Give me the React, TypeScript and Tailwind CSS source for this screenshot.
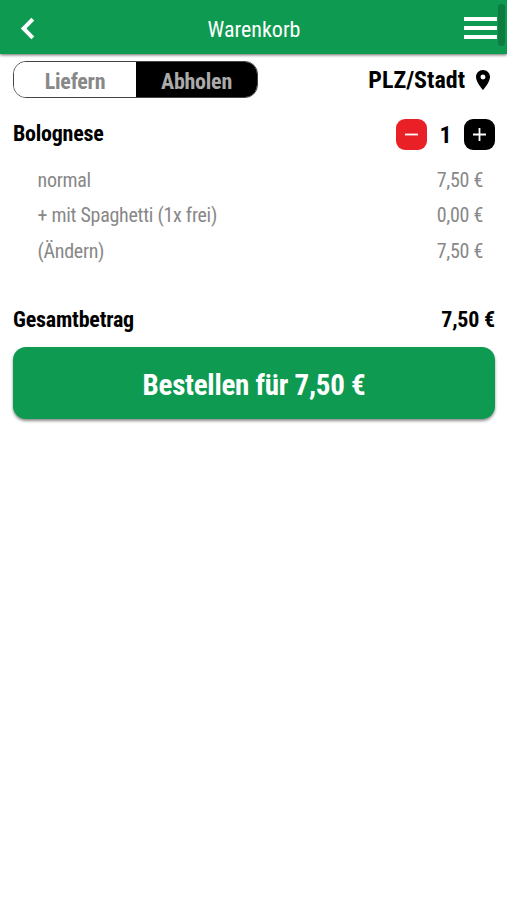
import { useState } from 'react';

interface CartLine {
  label: string;
  price: number;
}

const lines: CartLine[] = [
  { label: 'normal', price: 7.5 },
  { label: '+ mit Spaghetti (1x frei)', price: 0 },
  { label: '(Ändern)', price: 7.5 },
];

const formatPrice = (value: number) => `${value.toFixed(2).replace('.', ',')} €`;

function Header() {
  return (
    <header className="relative flex h-[54px] items-center justify-center bg-[#0e9a50] shadow-[0_1px_3px_rgba(0,0,0,0.6)]">
      <button className="absolute left-[20px] top-[17px]" aria-label="Zurück">
        <svg className="h-[23px] w-[15px]" viewBox="0 0 15 23" fill="none" stroke="white" strokeWidth="4">
          <path d="M12.8 2.2 3.6 11.5 12.8 20.8" />
        </svg>
      </button>
      <h1 className="pl-[1px] pt-[5px] text-[22px] leading-[26px] text-white">Warenkorb</h1>
      <button className="absolute right-[10px] top-[17px] flex flex-col gap-[5px]" aria-label="Menü">
        <span className="h-[4px] w-[33px] bg-white" />
        <span className="h-[4px] w-[33px] bg-white" />
        <span className="h-[4px] w-[33px] bg-white" />
      </button>
      {/* Scroll indicator */}
      <div className="absolute right-[2px] top-[4px] h-[42px] w-[7px] rounded-full bg-[#0c7c41]" />
    </header>
  );
}

export default function App() {
  const [pickup, setPickup] = useState(true);
  const [count, setCount] = useState(1);
  const total = 7.5 * count;

  return (
    <div className="min-h-screen bg-white font-['Roboto_Condensed','Roboto',sans-serif] text-black [font-stretch:75%]">
      <Header />

      <main className="pl-[13px] pr-[12px] pt-[7px]">
        <div className="flex items-center justify-between">
          <div className="flex h-[37px] w-[245px] overflow-hidden rounded-[13px] border border-[#444] text-[22px] font-bold leading-[36px] tracking-[-0.25px]">
            <button
              onClick={() => setPickup(false)}
              className={`w-[122px] pt-[2px] ${pickup ? 'bg-white text-[#888]' : 'bg-black text-[#aaa]'}`}
            >
              Liefern
            </button>
            <button
              onClick={() => setPickup(true)}
              className={`flex-1 pt-[2px] ${pickup ? 'bg-black text-[#aaa]' : 'bg-white text-[#888]'}`}
            >
              Abholen
            </button>
          </div>
          <button className="flex h-[37px] items-center gap-[11px] pr-[5px] pt-[1px] text-[24px] font-bold leading-[36px]">
            PLZ/Stadt
            <svg className="h-[20px] w-[14px]" viewBox="5 2 14 20" fill="currentColor">
              <path d="M12 2C8.13 2 5 5.13 5 9c0 5.25 7 13 7 13s7-7.75 7-13c0-3.87-3.13-7-7-7zm0 9.5a2.5 2.5 0 0 1 0-5 2.5 2.5 0 0 1 0 5z" />
            </svg>
          </button>
        </div>

        <div className="mt-[21px] flex h-[31px] items-center justify-between text-[22px] font-bold tracking-[-0.25px]">
          <span className="-mt-[2px]">Bolognese</span>
          <div className="flex items-center">
            <button
              onClick={() => setCount(Math.max(1, count - 1))}
              className="flex size-[31px] items-center justify-center rounded-[9px] bg-[#e92127]"
              aria-label="Weniger"
            >
              <svg className="size-[15px]" viewBox="0 0 15 15" stroke="white" strokeWidth="1.8">
                <path d="M1 7.5h13" />
              </svg>
            </button>
            <span className="w-[37px] pt-[1px] text-center text-[24px]">{count}</span>
            <button
              onClick={() => setCount(count + 1)}
              className="flex size-[31px] items-center justify-center rounded-[9px] bg-black"
              aria-label="Mehr"
            >
              <svg className="size-[15px]" viewBox="0 0 15 15" stroke="white" strokeWidth="1.8">
                <path d="M1 7.5h13M7.5 1v13" />
              </svg>
            </button>
          </div>
        </div>

        <ul className="mt-[13px] pl-[24.5px] pr-[12px] text-[20px] leading-[35.4px] tracking-[-0.28px] text-[#888]">
          {lines.map((line) => (
            <li key={line.label} className="flex justify-between">
              <span>{line.label}</span>
              <span>{formatPrice(line.price)}</span>
            </li>
          ))}
        </ul>

        <div className="mt-[37px] flex justify-between text-[22px] font-bold leading-[28px] tracking-[-0.2px]">
          <span>Gesamtbetrag</span>
          <span>{formatPrice(total)}</span>
        </div>

        <button className="mt-[13px] h-[72px] w-full rounded-[13px] bg-[#0e9a50] pt-[5px] text-[29px] font-bold tracking-[-0.25px] text-white shadow-[0_2px_3px_rgba(0,0,0,0.45)]">
          Bestellen für {formatPrice(total)}
        </button>
      </main>
    </div>
  );
}
